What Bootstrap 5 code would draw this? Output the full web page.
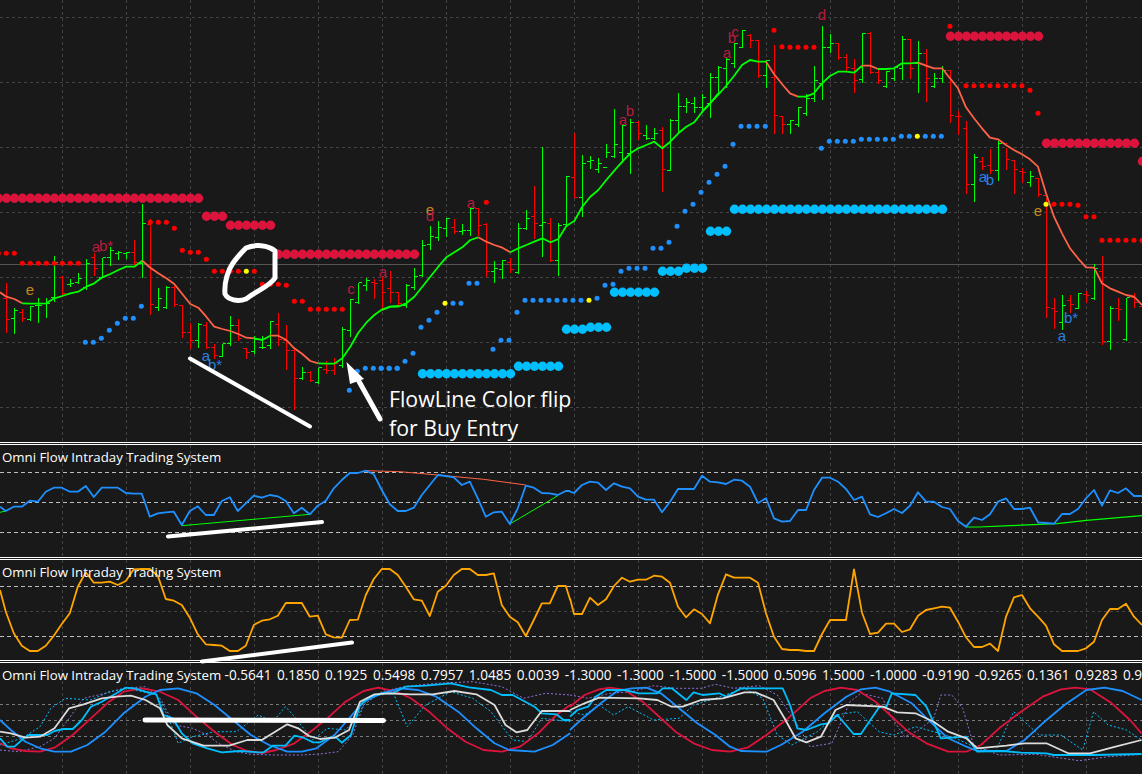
<!DOCTYPE html>
<html lang="en">
<head>
<meta charset="utf-8">
<title>Omni Flow Intraday Trading System</title>
<link href="https://cdn.jsdelivr.net/npm/bootstrap@5.3.0/dist/css/bootstrap.min.css" rel="stylesheet">
<style>
html,body{margin:0;background:#191919;}
.chart-stack{width:1142px;height:774px;background:#191919;}
.pane-box{flex:none;width:1142px;}
.pane-box svg{display:block;}
.pane-main{height:442px;}
.pane-osc1{height:112px;}
.pane-osc2{height:100px;}
.pane-osc3{height:111px;}
.pane-rule{flex:none;height:3px;border-top:1px solid #fff;border-bottom:1px solid #fff;}
.pane-title{left:2px;top:3px;font:13.25px/18px "Open Sans","Noto Sans",sans-serif;color:#fff;white-space:nowrap;}
.pane-nums{font-size:13.6px;word-spacing:2px;}
.overlay-ink{left:0;top:0;pointer-events:none;}
.flip-note{font:21.3px "Open Sans","Noto Sans",sans-serif;fill:#fff;}
.wave-tag{font:15px "Liberation Sans",sans-serif;}
</style>
</head>
<body>
<div class="chart-stack position-relative d-flex flex-column overflow-hidden">
  <div class="pane-box pane-main position-relative"><svg id="g0" width="1142" height="442" viewBox="0 0 1142 442"></svg></div>
  <div class="pane-rule"></div>
  <div class="pane-box pane-osc1 position-relative"><svg id="g1" width="1142" height="112" viewBox="0 445 1142 112"></svg><div class="pane-title position-absolute">Omni Flow Intraday Trading System</div></div>
  <div class="pane-rule"></div>
  <div class="pane-box pane-osc2 position-relative"><svg id="g2" width="1142" height="100" viewBox="0 560 1142 100"></svg><div class="pane-title position-absolute">Omni Flow Intraday Trading System</div></div>
  <div class="pane-rule"></div>
  <div class="pane-box pane-osc3 position-relative"><svg id="g3" width="1142" height="111" viewBox="0 663 1142 111"></svg><div class="pane-title position-absolute">Omni Flow Intraday Trading System <span class="pane-nums">-0.5641 0.1850 0.1925 0.5498 0.7957 1.0485 0.0039 -1.3000 -1.3000 -1.5000 -1.5000 0.5096 1.5000 -1.0000 -0.9190 -0.9265 0.1361 0.9283 0.9283</span></div></div>
  <svg class="overlay-ink position-absolute" width="1142" height="774" viewBox="0 0 1142 774">
    <g fill="none" stroke="#fff" stroke-linecap="round" stroke-linejoin="round">
      <path stroke-width="4" d="M190 358.5 310 426.5"/>
      <path stroke-width="5" d="M246 248C255 244 268 245 275 251L275 278C270 286 258 290 246 299 238 302 228 300 225 294 224 282 228 270 233 263 238 256 242 252 246 248Z"/>
      <path stroke-width="4" d="M168 536.5 322 522"/>
      <path stroke-width="4" d="M202 661.5 352 642.5"/>
      <path stroke-width="5" d="M145 720 383.500 720.500"/>
      <path stroke-width="5" d="M380 419 356 376"/>
    </g>
    <polygon fill="#fff" points="346.500,362 364,379 350,384"/>
    <text class="flip-note" x="389" y="407">FlowLine Color flip</text>
    <text class="flip-note" x="389" y="436">for Buy Entry</text>
  </svg>
</div>
<script>
const NS='http://www.w3.org/2000/svg';
function el(p,n,a,t){const e=document.createElementNS(NS,n);for(const k in a)e.setAttribute(k,a[k]);if(t)e.textContent=t;p.appendChild(e);return e;}
const Z={z1:(x,y)=>[x/3,170+y/3],z2:(x,y)=>[380+x/3,90+y/3],z3:(x,y)=>[700+x/3,y/3],z4:(x,y)=>[x/2.75,435+y/3],z5:(x,y)=>[570+x/2.75,435+y/3],z6:(x,y)=>[x/2.75,655+y/3],z7:(x,y)=>[570+x/2.75,655+y/3]};
const conv=(f,s)=>s.trim().split(/\s+/).map(p=>{const[a,b]=p.split(',').map(Number);return Z[f](a,b)});
const pl=(g,pts,col,w,dash)=>{const a={points:pts.map(p=>p[0].toFixed(1)+','+p[1].toFixed(1)).join(' '),fill:'none',stroke:col,'stroke-width':w,'stroke-linejoin':'round'};if(dash)a['stroke-dasharray']=dash;return el(g,'polyline',a)};
function grid(g,y0,y1,hs,hc){
  for(let x=62;x<1142;x+=64)el(g,'line',{x1:x+.5,x2:x+.5,y1:y0,y2:y1,stroke:'#444','stroke-dasharray':'3 3'});
  hs.forEach(h=>el(g,'line',{x1:0,x2:1142,y1:h[0]+.5,y2:h[0]+.5,stroke:h[1]||hc,'stroke-dasharray':h[2]||'3 3'}));
}
const g0=document.getElementById('g0'),g1=document.getElementById('g1'),g2=document.getElementById('g2'),g3=document.getElementById('g3');
grid(g0,0,442,[[17],[82],[147],[212],[277],[342],[407]],'#444');
el(g0,'line',{x1:0,x2:1142,y1:264.5,y2:264.5,stroke:'#555'});
/* OHLC bars: colour top bottom left right, in crop coordinates */
const B1='r335,487,385,448 g412,490,445,420 r415,452,425,445 g405,450,447,408 g382,455,405,405 g382,440,400,400 g255,392,380,275 r315,378,320,370 g325,347,343,338 g306,340,335,325 g265,358,350,280 r245,315,262,295 g262,322,320,262 g228,285,260,240 g240,267,250,247 g243,265,250,247 r208,282,247,275 g100,320,280,160 r145,432,162,402 g352,420,410,385 g345,415,412,350 r345,408,350,403 r403,502,405,487 r455,535,487,510 g455,530,510,462 r452,535,465,530 r518,565,532,555 g518,558,558,518 g435,525,520,465 r445,510,465,505 r530,565,535,545 g495,548,542,507 g495,535,530,530 g450,535,525,452 r427,525,462,508 r462,598,510,540 r535,718,540,625 g588,628,625,605 r600,632,605,630 g590,638,635,592 r570,610,598,600 r560,612,600,578 g468,590,585,478 g385,498,480,388 g335,400,395,337 g322,360,345,330 r325,385,335,340';
const B2='r555,660,570,605 r540,635,595,605 r603,645,607,638 g578,650,645,585 g530,597,590,558 g448,557,555,465 g405,478,463,437 g390,450,440,410 g382,437,415,385 r385,430,410,422 g400,432,422,420 g352,435,420,355 r352,435,355,405 r395,557,403,543 g510,575,543,535 g507,565,538,510 r500,545,515,538 g397,548,545,415 g357,418,415,385 r285,443,378,400 g168,497,405,395 r380,513,398,510 g395,555,510,405 g255,408,402,258 r125,322,260,322 g193,378,320,220 g195,235,212,210 g200,245,238,220 g160,200,230,185 g55,200,197,162 g98,215,185,105 g85,248,190,95 r90,147,95,128 g102,148,135,143 g112,148,143,130 r108,303,120,238 g85,240,240,90 g5,125,90,47 g20,65,47,35 g18,65,40,50';
const B3='g280,335,320,290 g217,350,310,230 g195,280,230,202 g170,260,205,178 g125,200,190,130 g88,140,140,90 r100,140,105,120 r118,232,120,225 g178,262,225,180 r133,400,230,345 r345,400,348,372 g357,400,372,360 g318,377,372,322 g280,345,340,295 g195,302,295,240 g75,298,250,142 g98,155,142,128 r125,178,130,172 r160,210,172,200 r175,275,205,240 g97,247,238,100 r93,220,100,215 r205,248,215,240 g210,260,258,212 g200,240,235,202 g105,238,205,118 r117,235,118,205 g120,275,190,160 r145,302,160,235 g215,262,258,235 g195,245,235,210 r208,365,210,345 r330,403,348,348 r360,578,385,552 g460,602,552,470 r468,508,482,498 r445,520,495,510 g420,540,510,430 r440,508,430,478 r478,578,480,508 r500,545,512,515 g510,558,545,528 r530,587,535,582 r590,950,585,922 r890,985,925,932 g882,988,965,915 r883,935,900,912 g877,925,925,880 r870,905,883,885 g788,897,893,805 r765,1033,812,1022 g915,1048,1022,925 r890,960,925,928 g890,1020,1018,892 r875,920,890,905 r905,935,918,925';
let k=0;
function bars(s,yf){let d={r:'',g:''};s.split(' ').forEach(b=>{const c=b[0],[t,bt,l,r]=b.slice(1).split(',').map(Number);const x=6+8*k+.5;
  const Y=v=>Math.round(yf(v))+.5;
  d[c]+=`M${x} ${Y(t)}V${Y(bt)}M${x-3.5} ${Y(l)}H${x}M${x} ${Y(r)}H${x+3.5}`;k++;});
  el(g0,'path',{d:d.r,stroke:'#ff0000',fill:'none','shape-rendering':'crispEdges'});el(g0,'path',{d:d.g,stroke:'#00ff00',fill:'none','shape-rendering':'crispEdges'});}
bars(B1,y=>170+y/3);bars(B2,y=>90+y/3);bars(B3,y=>y/3);
/* Flow line */
const OR='#ff6347',LM='#00ff00';
[[ 'z1',OR,'0,367 19,380 43,387 67,400'],['z1',LM,'67,400 91,401 115,401 139,400 163,385 187,378 211,370 235,365 259,350 283,340 307,322 331,312 355,300 379,290 403,290 427,272'],['z1',OR,'427,272 451,293 475,310 499,325 523,342 547,372 571,402 595,413 619,440 643,470 667,477 691,483 715,492 739,503 763,505'],['z1',LM,'763,505 787,510 811,497'],['z1',OR,'811,497 835,497 859,510 883,535 907,552 931,573 955,580'],['z1',LM,'955,580 979,581 1003,581 1027,565 1051,530 1075,488 1099,458 1123,435 1147,418 1171,410 1195,408'],
['z2',LM,'7,660 31,650 55,650 79,640 103,620 127,590 151,560 175,530 199,502 223,487 247,472 271,450 295,442'],['z2',OR,'295,442 319,455 343,465 367,473 391,487'],['z2',LM,'391,487 415,475 439,465 463,455 487,445 511,457 535,447 559,408 583,393 607,350 631,320 655,300 679,270 703,242 727,215 751,190 775,175 799,165 823,155 847,175 871,155 895,130 919,110 943,97 967,65 991,40 1015,10'],
['z3',LM,'6,335 30,310 54,285 78,258 102,228 126,195 150,180 174,185 198,185'],['z3',OR,'198,185 222,222 246,252 270,280 294,290'],['z3',LM,'294,290 318,290 342,280 366,250 390,228 414,215 438,215 462,218 486,197'],['z3',OR,'486,197 510,197 534,207'],['z3',LM,'534,207 558,207 582,205 606,190 630,190 654,188'],['z3',OR,'654,188 678,197 702,205 726,205 750,235 774,265 798,322 822,355 846,385 870,413 894,418 918,435 942,450 966,463 990,478 1014,500 1038,580 1062,650 1086,700 1110,745 1134,775 1158,802 1182,803 1206,850 1230,865 1254,875 1278,885 1302,890 1326,915']
].forEach(s=>pl(g0,conv(s[0],s[2]),s[1],1.8));
/* Big stop dots */
function big(a,b,y,c){for(let i=a;i<=b;i++)el(g0,'circle',{cx:6.5+8*i,cy:y,r:4.7,fill:c});}
const CR='#dc143c',SK='#00bfff';
[[-1,24,198.3],[25,27,216.3],[28,33,225.3],[34,51,254.3],[118,129,36.3],[130,141,143.3],[142,143,161.3]].forEach(s=>big(s[0],s[1],s[2],CR));
[[52,63,373.7],[64,69,366.3],[70,72,329.3],[73,75,327.3],[76,81,292.3],[82,84,271.3],[85,87,268.3],[88,90,231.3],[91,117,209.3]].forEach(s=>big(s[0],s[1],s[2],SK));
/* Small dots */
function dots(f,s,c){conv(f,s).forEach(p=>el(g0,'circle',{cx:p[0],cy:p[1],r:2.5,fill:c}));}
dots('z1','-5,250 19,250 43,250 67,280 91,280 115,280 139,280 163,280 187,280 211,280 235,280 451,157 475,157 499,157 523,175 547,241 571,247 595,247 619,268 643,304 667,304 691,304 715,304 763,304 787,343 811,343 835,343 859,346 883,394 907,394 931,418 955,418 979,418 1003,418 1027,418','#ff0000');
dots('z2','319,337','#ff0000');
dots('z3','222,91 246,140 270,142 294,142 318,142 342,142 750,79 798,257 822,257 846,257 870,257 894,257 918,257 942,257 966,257 990,271 1014,340 1062,613 1086,613 1110,613 1134,616 1158,650 1182,650 1206,721 1230,721 1254,721 1278,721 1302,721 1326,721','#ff0000');
dots('z1','256,517 280,517 304,505 328,481 352,460 376,445 400,445 424,409 1048,661 1072,604 1096,595 1120,595 1144,595 1168,595 1192,595','#1e90ff');
dots('z2','3,835 27,835 51,835 75,814 99,790 123,712 147,691 171,667 219,640 243,640 267,580 291,580 339,778 363,751 387,751 411,667 435,631 459,631 483,631 507,631 531,631 555,631 579,631 603,631 651,625 675,586 699,583 723,544 747,535 771,535 795,535 819,475 843,475 867,457 891,409 915,364 939,343 963,307 987,277 1011,253 1035,229 1059,163 1083,109 1107,109 1131,109','#1e90ff');
dots('z3','196,379 364,445 388,424 412,424 436,424 460,424 484,418 508,418 532,418 556,418 580,418 604,409 628,409 676,409 700,409 724,409','#1e90ff');
dots('z1','739,304','#ffff00');dots('z2','195,640 627,631','#ffff00');dots('z3','652,409 1038,613','#ffff00');
/* Wave tags */
const GO='#c8861e',CT='#b81c3e',BT='#2a80e0';
[['e',30,295,GO],['a',96,252,CT],['b*',106,251,CT],['a',206,361,BT],['b*',215,370,BT],['c',351,294,CT],['a',383,277,CT],['e',430,215,GO],['d',430,221,CT],['a',471,208,CT],['a',623,125,CT],['b',630,116,CT],['a',727,58,CT],['b',732,43,CT],['c',735,37,CT],['d',822,20,CT],['a',983,182,BT],['b',990,185,BT],['e',1038,216,GO],['b*',1071,323,BT],['a',1062,341,BT]]
.forEach(t=>el(g0,'text',{x:t[1],y:t[2],fill:t[3],'text-anchor':'middle','class':'wave-tag'},t[0]));
/* Oscillator 1 */
grid(g1,445,557,[[472],[502],[532]],'#bdbdbd');
g1.querySelectorAll('line').forEach((l,i,a)=>{if(i>=a.length-3)l.setAttribute('stroke-dasharray','4 3')});
pl(g1,conv('z4','0,232 16,228'),LM,1);pl(g1,conv('z4','500,272 852,238'),LM,1);pl(g1,conv('z4','1402,267 1534,182'),LM,1);
pl(g1,conv('z4','1006,107 1100,110 1204,120 1330,133 1446,150'),OR,1);
pl(g1,conv('z5','1089,276 1125,276 1210,272 1290,268 1340,266 1420,256 1573,242'),LM,1.2);
const dp='#1e90ff';
pl(g1,conv('z4','0,215 16,228 38,215 60,215 82,197 104,200 126,170 148,158 170,158 192,170 214,170 236,153 258,186 280,158 302,158 324,158 346,174 368,176 390,176 412,245 434,235 456,232 478,230 500,270 522,228 544,214 566,240 588,240 610,198 632,187 654,228 676,205 698,182 720,188 742,180 764,184 786,198 808,235 830,218 852,238 874,212 896,197 918,160 940,135 962,114 984,114 1006,107 1028,118 1050,165 1072,208 1094,228 1116,228 1138,218 1160,180 1182,150 1204,120 1226,123 1248,127 1270,150 1292,140 1314,190 1336,245 1358,232 1380,230 1402,267 1424,220 1446,152 1468,158 1490,174 1512,175 1534,180 1556,168 1568,168'),dp,1.8);
pl(g1,conv('z5','0,170 11,174 33,150 55,140 77,143 99,165 121,145 143,155 165,160 187,185 209,194 231,194 253,232 275,200 297,162 319,162 341,162 363,122 385,140 407,142 429,147 451,134 473,137 495,155 517,204 539,190 561,250 583,260 605,258 627,225 649,225 671,165 693,128 715,128 737,140 759,162 781,195 803,185 825,238 847,246 869,235 891,222 913,234 935,212 957,172 979,200 1001,200 1023,216 1045,222 1067,258 1089,275 1111,248 1133,255 1155,238 1177,200 1199,190 1221,222 1243,222 1265,218 1287,262 1309,264 1331,266 1353,237 1375,237 1397,222 1419,190 1441,165 1463,212 1485,166 1507,174 1529,160 1551,183 1573,183'),dp,1.8);
/* Oscillator 2 */
grid(g2,560,660,[[586,'#bdbdbd','4 3'],[611,'#444'],[636,'#bdbdbd','4 3']],'#444');
const AM='#ffa500';
pl(g2,conv('z4','0,465 16,530 38,595 60,632 82,648 104,648 126,632 148,602 170,567 192,535 214,455 236,412 258,443 280,443 302,440 324,450 346,438 368,403 390,402 412,402 434,422 456,492 478,497 500,510 522,548 544,598 566,628 588,630 610,632 632,648 654,648 676,632 698,570 720,557 742,553 764,542 786,504 808,504 830,504 852,545 874,542 896,598 918,607 940,608 962,555 984,554 1006,480 1028,432 1050,402 1072,402 1094,420 1116,455 1138,493 1160,497 1182,543 1204,470 1226,452 1248,420 1270,402 1292,402 1314,420 1336,420 1358,415 1380,510 1402,545 1424,562 1446,603 1468,555 1490,505 1512,505 1534,453 1556,453 1568,495'),AM,1.8);
pl(g2,conv('z5','0,490 11,537 33,537 55,488 77,510 99,493 121,453 143,428 165,440 187,434 209,434 231,422 253,425 275,443 297,515 319,547 341,523 363,537 385,565 407,478 429,418 451,428 473,428 495,428 517,443 539,535 561,605 583,642 605,645 627,645 649,648 671,648 693,597 715,555 737,555 759,555 781,403 803,533 825,597 847,593 869,566 891,566 913,591 935,583 957,542 979,525 1001,520 1023,515 1045,518 1067,560 1089,607 1111,636 1133,636 1155,626 1177,648 1199,545 1221,487 1243,480 1265,520 1287,545 1309,572 1331,628 1353,648 1375,648 1397,648 1419,640 1441,620 1463,555 1485,522 1507,522 1529,506 1551,545 1573,570'),AM,1.8);
/* Oscillator 3 */
grid(g3,663,774,[[704,'#7a7a7a'],[720,'#7a7a7a'],[736,'#7a7a7a']],'#444');
[[ '#9370db','0,285 50,290 110,275 150,250 190,190 230,130 290,115 340,100 400,95 440,130 480,210 530,220 570,240 600,265 650,290 690,298 750,300 830,300 880,297 930,290 970,240 1000,150 1050,110 1110,95 1200,85 1300,80 1380,95 1440,130 1500,115 1568,120','0,120 50,130 110,115 170,110 230,92 290,100 360,100 400,88 450,100 520,92 570,120 620,200 660,275 720,265 770,140 800,115 860,130 880,180 920,245 960,225 1000,190 1020,120 1050,120 1080,160 1110,270 1180,300 1280,298 1400,317 1480,305 1572,298'],
['#00bfff','0,270 60,250 110,215 140,160 180,130 250,135 300,110 350,100 430,120 460,180 490,265 530,245 590,230 650,230 710,180 750,200 785,155 810,185 860,255 900,220 950,225 980,190 1010,130 1080,110 1120,215 1170,150 1240,110 1300,130 1350,170 1410,255 1450,260 1490,190 1568,200','0,170 40,180 80,150 120,180 160,155 230,195 300,190 340,150 400,130 480,100 530,130 570,240 610,270 680,230 730,180 790,170 850,230 890,240 950,215 1000,230 1060,250 1120,280 1170,290 1220,170 1290,240 1350,240 1410,285 1440,170 1480,210 1530,225 1572,255']
].forEach(s=>{pl(g3,conv('z6',s[1]),s[0],1,'2 2');pl(g3,conv('z7',s[2]),s[0],1,'2 2');});
[['#dc143c','0,265 30,280 70,288 110,290 150,278 200,240 250,190 300,140 340,110 390,100 440,110 490,135 540,185 590,230 640,270 680,288 720,294 760,285 810,265 860,225 900,190 950,140 1000,108 1040,98 1090,110 1130,130 1180,170 1230,220 1280,260 1330,285 1380,290 1430,275 1480,235 1530,180 1568,150','0,155 40,120 80,103 110,98 150,105 200,140 240,180 290,230 340,265 390,285 440,290 490,277 540,240 600,190 660,130 700,108 745,98 790,105 840,140 880,180 930,230 980,265 1040,290 1090,290 1130,270 1180,220 1240,170 1300,125 1350,103 1390,98 1430,103 1490,145 1540,195 1572,235'],
['#1e90ff','0,195 30,225 70,260 110,280 150,290 195,290 240,270 290,230 340,175 400,125 440,105 490,100 540,115 590,150 640,195 690,240 740,270 790,290 830,290 870,280 920,240 960,190 1000,140 1050,115 1100,100 1150,105 1200,125 1260,170 1310,220 1360,265 1400,285 1470,290 1520,270 1568,235','0,225 40,185 90,140 130,108 170,100 210,98 250,115 300,160 350,205 400,240 440,275 470,288 540,290 580,270 640,230 700,175 760,125 800,103 840,98 880,110 940,145 990,200 1040,250 1090,275 1120,288 1200,288 1250,255 1300,205 1360,150 1420,105 1470,98 1520,108 1572,135'],
['#00bfff','0,250 20,275 40,275 65,250 80,240 100,240 130,240 150,228 175,222 200,222 225,195 250,155 280,140 320,115 345,98 370,100 400,110 430,118 450,180 475,190 500,235 530,265 570,280 610,292 660,288 710,292 725,292 750,272 785,272 810,242 835,248 860,262 880,262 905,248 925,248 940,263 965,240 990,150 1020,125 1050,115 1080,115 1115,95 1170,92 1240,85 1290,97 1350,105 1380,120 1410,120 1470,155 1490,175 1530,178 1550,195 1568,195','0,185 20,165 50,155 70,125 100,105 150,105 190,115 240,115 255,100 280,100 320,135 340,112 365,120 410,115 430,125 470,100 540,100 585,100 605,150 625,220 650,225 690,208 710,205 735,180 780,237 800,237 850,157 870,155 885,115 950,120 980,155 1020,250 1090,245 1120,290 1190,288 1240,293 1310,295 1330,300 1440,300 1572,297'],
['#dcdcdc','0,230 30,235 70,248 110,245 150,220 190,160 230,148 280,130 320,125 360,122 400,135 440,160 460,210 500,250 560,272 630,272 680,255 720,255 750,235 790,208 820,220 850,243 880,252 920,248 960,225 990,140 1030,118 1070,115 1130,118 1190,118 1250,108 1310,118 1360,150 1390,210 1420,232 1450,225 1490,168 1568,168','0,165 40,145 80,128 190,130 240,135 280,155 310,155 360,135 420,130 480,112 510,112 560,135 590,190 620,250 650,262 690,245 730,165 760,150 860,155 900,172 950,175 1000,200 1040,230 1090,250 1120,280 1200,272 1250,265 1310,265 1370,295 1430,295 1500,275 1572,255']
].forEach(s=>{pl(g3,conv('z6',s[1]),s[0],1.8);pl(g3,conv('z7',s[2]),s[0],1.8);});
</script>
</body>
</html>
